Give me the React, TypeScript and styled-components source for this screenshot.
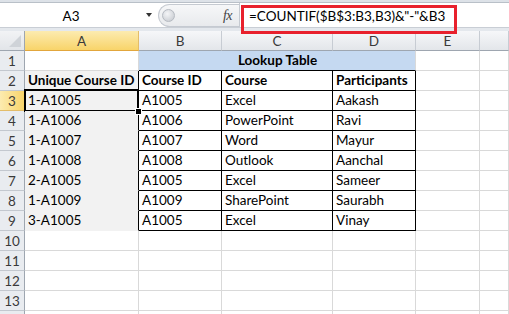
import React, { FC } from "react";

import styled, { createGlobalStyle, css } from "styled-components";

const GRID = "#d9d9d9";
const COLS = "25px 114px 83px 111px 83px 64px 1fr";

const GlobalStyle = createGlobalStyle`
  html, body {
    margin: 0;
    padding: 0;
    width: 509px;
    height: 314px;
    overflow: hidden;
    background: #fff;
    font-family: Lato, "Liberation Sans", Arial, sans-serif;
  }
`;

const rows: string[][] = [
  ["1-A1005", "A1005", "Excel", "Aakash"],
  ["1-A1006", "A1006", "PowerPoint", "Ravi"],
  ["1-A1007", "A1007", "Word", "Mayur"],
  ["1-A1008", "A1008", "Outlook", "Aanchal"],
  ["2-A1005", "A1005", "Excel", "Sameer"],
  ["1-A1009", "A1009", "SharePoint", "Saurabh"],
  ["3-A1005", "A1005", "Excel", "Vinay"],
];

const headers = ["Unique Course ID", "Course ID", "Course", "Participants"];

const App: FC = () => {
  return (
    <Root>
      <GlobalStyle />
      <TopStrip />
      <FormulaBar>
        <NameBox>
          <NameText>A3</NameText>
          <DropArrow />
        </NameBox>
        <Splitter>
          <Knob />
          <Fx>fx</Fx>
        </Splitter>
        <FormulaInput>=COUNTIF($B$3:B3,B3)&amp;"-"&amp;B3</FormulaInput>
        <Highlight />
      </FormulaBar>
      <Gap />
      <Sheet>
        <HeadRow>
          <Corner>
            <CornerTriangle />
          </Corner>
          {["A", "B", "C", "D", "E", ""].map((c, i) => (
            <ColHead key={i} $active={c === "A"}>
              {c}
            </ColHead>
          ))}
        </HeadRow>

        <Row>
          <RowHead>1</RowHead>
          <Cell />
          <Cell $span={3} $fill="#c5d9f1" $bottom="#000" $bold $center>
            Lookup Table
          </Cell>
          <Cell />
          <Cell />
        </Row>

        <Row>
          <RowHead>2</RowHead>
          {headers.map((h, i) => (
            <Cell
              key={i}
              $bold
              $fill={i === 0 ? "#f2f2f2" : undefined}
              $right="#000"
              $bottom={i === 0 ? "#f2f2f2" : "#000"}
            >
              {h}
            </Cell>
          ))}
          <Cell />
          <Cell />
        </Row>

        {rows.map((r, ri) => (
          <Row key={ri}>
            <RowHead $active={ri === 0}>{ri + 3}</RowHead>
            {r.map((v, ci) => (
              <Cell
                key={ci}
                $fill={ci === 0 ? "#f2f2f2" : undefined}
                $right="#000"
                $bottom={ci === 0 ? "#f2f2f2" : "#000"}
                $selected={ri === 0 && ci === 0}
              >
                {v}
                {ri === 0 && ci === 0 && <Handle />}
              </Cell>
            ))}
            <Cell />
            <Cell />
          </Row>
        ))}

        {[10, 11, 12, 13, 14].map((n) => (
          <Row key={n}>
            <RowHead>{n < 14 ? n : ""}</RowHead>
            {[0, 1, 2, 3, 4, 5].map((c) => (
              <Cell key={c} />
            ))}
          </Row>
        ))}
      </Sheet>
    </Root>
  );
};

export default App;

const Root = styled.div`
  width: 509px;
  height: 314px;
  overflow: hidden;
  font-size: 13.5px;
  color: #000;
`;
const TopStrip = styled.div`
  height: 2px;
  background: #dde2e8;
  border-bottom: 1px solid #b9c0c8;
`;
const FormulaBar = styled.div`
  position: relative;
  display: flex;
  height: 24px;
  background: #fff;
  border-bottom: 1px solid #c9ced5;
`;
const NameBox = styled.div`
  position: relative;
  width: 158px;
  display: flex;
  align-items: center;
  background: #fff;
`;
const NameText = styled.span`
  width: 142px;
  text-align: center;
  font-size: 13.5px;
  padding-top: 1px;
`;
const DropArrow = styled.span`
  width: 0;
  height: 0;
  margin-left: 4px;
  border-left: 3px solid transparent;
  border-right: 3px solid transparent;
  border-top: 4px solid #333;
`;
const Splitter = styled.div`
  display: flex;
  align-items: center;
  justify-content: space-between;
  width: 81px;
  margin: 1px 0 0;
  padding: 0 4px 0 3px;
  box-sizing: border-box;
  background: linear-gradient(#f6f7f8, #e8eaed);
  border: 1px solid #c5cad1;
  border-right: none;
  border-radius: 12px 0 0 12px;
`;
const Knob = styled.span`
  width: 11px;
  height: 11px;
  border-radius: 50%;
  background: radial-gradient(circle at 40% 35%, #f4f5f7, #c2c6cc);
  border: 1px solid #b5bac1;
`;
const Fx = styled.span`
  font-family: "Liberation Serif", "Times New Roman", serif;
  font-style: italic;
  font-size: 14px;
  color: #444;
  letter-spacing: -0.5px;
  margin-right: 3px;
`;
const FormulaInput = styled.div`
  flex: 1;
  display: flex;
  align-items: center;
  padding: 2px 0 0 9px;
  font-size: 13.5px;
  white-space: nowrap;
  border-left: 1px solid #c5cad1;
`;
const Highlight = styled.div`
  position: absolute;
  left: 241px;
  top: 2px;
  width: 216px;
  height: 29px;
  box-sizing: border-box;
  border: 3px solid #e8212d;
  z-index: 3;
`;
const Gap = styled.div`
  height: 3px;
  background: #e4e8ed;
`;
const Sheet = styled.div`
  display: flex;
  flex-direction: column;
`;
const HeadRow = styled.div`
  display: grid;
  grid-template-columns: ${COLS};
  height: 20px;
`;
const Row = styled.div`
  display: grid;
  grid-template-columns: ${COLS};
  height: 20px;
`;
const headBase = css`
  box-sizing: border-box;
  display: flex;
  align-items: center;
  justify-content: center;
  font-size: 13.5px;
  color: #3a3a3a;
`;
const Corner = styled.div`
  ${headBase};
  position: relative;
  background: linear-gradient(#f2f3f5, #e2e5e9);
  border-right: 1px solid #9ea6b0;
  border-bottom: 1px solid #9ea6b0;
`;
const CornerTriangle = styled.span`
  position: absolute;
  right: 3px;
  bottom: 3px;
  width: 0;
  height: 0;
  border-left: 12px solid transparent;
  border-bottom: 12px solid #cfd3d8;
`;
const ColHead = styled.div<{ $active?: boolean }>`
  ${headBase};
  background: ${({ $active }) =>
    $active
      ? "linear-gradient(#fcebb0, #f8d46a)"
      : "linear-gradient(#f6f7f9, #e3e6ea)"};
  border-right: 1px solid ${({ $active }) => ($active ? "#e3bd6a" : "#c7ccd3")};
  border-bottom: 1px solid ${({ $active }) => ($active ? "#e2a63c" : "#9ea6b0")};
`;
const RowHead = styled.div<{ $active?: boolean }>`
  ${headBase};
  background: ${({ $active }) =>
    $active ? "linear-gradient(90deg, #fcebb0, #f8d46a)" : "#e9ecf0"};
  border-right: 1px solid ${({ $active }) => ($active ? "#e2a63c" : "#9ea6b0")};
  border-bottom: 1px solid ${({ $active }) => ($active ? "#e3bd6a" : "#c3c8cf")};
`;
const Cell = styled.div<{
  $span?: number;
  $fill?: string;
  $right?: string;
  $bottom?: string;
  $bold?: boolean;
  $center?: boolean;
  $selected?: boolean;
}>`
  position: relative;
  box-sizing: border-box;
  display: flex;
  align-items: flex-end;
  justify-content: ${({ $center }) => ($center ? "center" : "flex-start")};
  padding: 0 2px 2px 3px;
  grid-column: span ${({ $span }) => $span || 1};
  white-space: nowrap;
  overflow: visible;
  font-size: 13.5px;
  font-weight: ${({ $bold }) => ($bold ? 700 : 400)};
  background: ${({ $fill }) => $fill || "#fff"};
  border-right: 1px solid ${({ $right }) => $right || GRID};
  border-bottom: 1px solid ${({ $bottom }) => $bottom || GRID};

  ${({ $selected }) =>
    $selected &&
    css`
      &::after {
        content: "";
        position: absolute;
        left: -1px;
        top: -2px;
        right: -1px;
        bottom: -2px;
        border: 2px solid #000;
        pointer-events: none;
      }
    `}
`;
const Handle = styled.span`
  position: absolute;
  right: -4px;
  bottom: -5px;
  width: 5px;
  height: 5px;
  background: #000;
  border: 1px solid #fff;
  z-index: 2;
`;
